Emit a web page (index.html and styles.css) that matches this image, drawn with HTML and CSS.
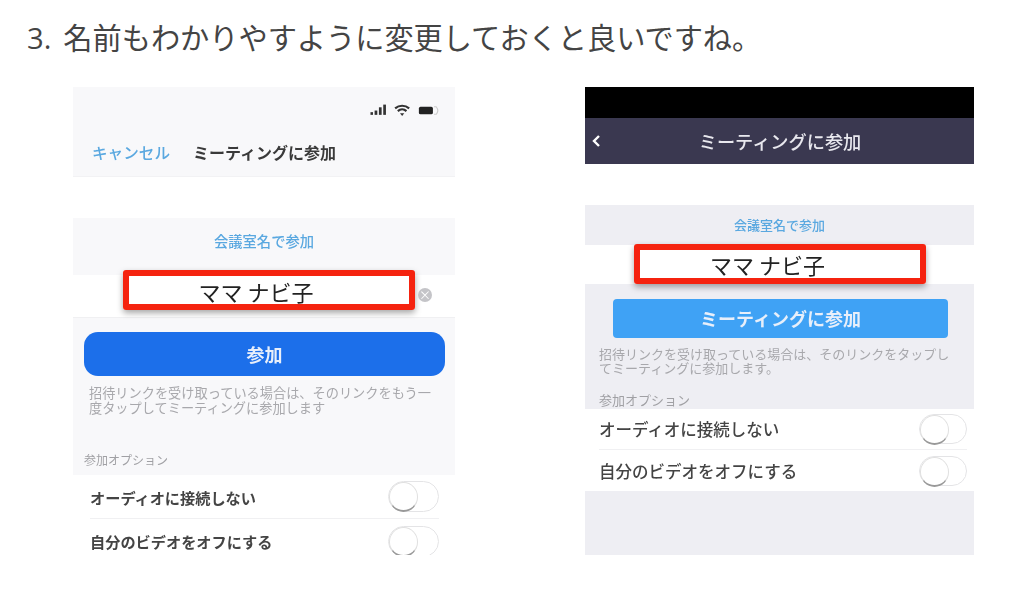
FILE: index.html
```html
<!DOCTYPE html>
<html lang="ja">
<head>
    <meta charset="UTF-8">
    <meta name="viewport" content="width=device-width, initial-scale=1.0">
    <title>名前の変更</title>
    <link rel="stylesheet" href="styles.css">
</head>
<body>
    <main class="page">
        <h2 class="step"><span class="step-num">3.</span>名前もわかりやすように変更しておくと良いですね。</h2>
        <div class="shots">
            <!-- iOS -->
            <section class="phone ios">
                <div class="status">
                    <svg width="68" height="12" viewBox="0 0 68 12">
                        <rect x="0" y="8" width="2.5" height="2.5" fill="#333"/>
                        <rect x="4" y="6.5" width="2.5" height="4" fill="#333"/>
                        <rect x="8" y="3.5" width="2.5" height="7" fill="#333"/>
                        <rect x="12" y="1" width="2.5" height="9.5" fill="#333"/>
                        <path d="M23 4.5a10 10 0 0 1 13 0M25.5 7a6 6 0 0 1 8 0" fill="none" stroke="#333" stroke-width="2"/>
                        <path d="M27.5 9h4l-2 2.5z" fill="#333"/>
                        <rect x="45" y="3" width="13" height="7" rx="1.5" fill="#222"/>
                        <path d="M59 3h2q3 3.500 0 7h-2" fill="none" stroke="#ccc"/>
                    </svg>
                </div>
                <div class="navbar">
                    <span class="cancel">キャンセル</span>
                    <span class="nav-title">ミーティングに参加</span>
                </div>
                <div class="room-label">会議室名で参加</div>
                <div class="name-row">
                    <span class="name">ママ ナビ子</span>
                    <span class="name-mark"></span>
                    <span class="clear-btn">×</span>
                </div>
                <div class="join-area">
                    <div class="join-btn">参加</div>
                    <p class="help">招待リンクを受け取っている場合は、そのリンクをもう一度タップしてミーティングに参加します</p>
                    <p class="opt-label">参加オプション</p>
                </div>
                <div class="opt-list">
                    <div class="opt-row"><span>オーディオに接続しない</span><i class="toggle"></i></div>
                    <div class="opt-row"><span>自分のビデオをオフにする</span><i class="toggle"></i></div>
                </div>
            </section>

            <!-- Android -->
            <section class="phone droid">
                <div class="blackbar"></div>
                <div class="navbar">
                    <svg class="back" width="10" height="14" viewBox="0 0 10 14"><path d="M8 2L3 7l5 5" fill="none" stroke="#fff" stroke-width="2.4"/></svg>
                    <span class="nav-title">ミーティングに参加</span>
                </div>
                <div class="room-label">会議室名で参加</div>
                <div class="name-row">
                    <span class="name">ママ ナビ子</span>
                    <span class="name-mark"></span>
                </div>
                <div class="join-area">
                    <div class="join-btn">ミーティングに参加</div>
                    <p class="help">招待リンクを受け取っている場合は、そのリンクをタップしてミーティングに参加します。</p>
                    <p class="opt-label">参加オプション</p>
                </div>
                <div class="opt-list">
                    <div class="opt-row"><span>オーディオに接続しない</span><i class="toggle"></i></div>
                    <div class="opt-row"><span>自分のビデオをオフにする</span><i class="toggle"></i></div>
                </div>
                <div class="filler"></div>
            </section>
        </div>
    </main>
</body>
</html>
```

FILE: styles.css
```css
body {
    margin: 0;
    background-color: #fff;
    color: #444;
    font-family: "Noto Sans CJK JP", "Open Sans", sans-serif;
}
.page {
    padding: 16px 0 0 27px;
}
.step {
    margin: 0;
    height: 40px;
    font-size: 29.2px;
    line-height: 40px;
    font-weight: 400;
    white-space: nowrap;
    color: #444;
}
.step-num {
    font-family: "Open Sans", sans-serif;
    margin-right: 12px;
}
.shots {
    display: flex;
    gap: 130px;
    margin: 31px 0 0 46px;
}
.phone {
    height: 468px;
    overflow: hidden;
    color: #333;
    display: flex;
    flex-direction: column;
}
.phone > * {
    flex-shrink: 0;
}
.phone p {
    margin: 0;
}
.ios {
    width: 382px;
}
.droid {
    width: 389px;
}

/* top bars */
.status {
    height: 37px;
    background: #f8f8fa;
    display: flex;
    justify-content: flex-end;
    align-items: flex-end;
    padding-right: 14px;
}
.status svg {
    filter: blur(0.5px);
    margin-bottom: 8px;
    transform: scale(1.08);
}
.ios .navbar {
    height: 53px;
    background: #f8f8fa;
    border-bottom: 1px solid #f2f2f4;
    box-sizing: border-box;
    display: flex;
    align-items: center;
    padding: 3px 0 0 19px;
    gap: 23px;
    margin-bottom: 41px;
}
.cancel {
    font-size: 15.6px;
    font-weight: 500;
    color: #5aa8e0;
    filter: blur(0.7px);
}
.nav-title {
    font-size: 16px;
    font-weight: 700;
    color: #3a3a3a;
    filter: blur(0.6px);
    white-space: nowrap;
}
.blackbar {
    height: 31px;
    background: #000;
}
.droid .navbar {
    height: 46px;
    background: #3a3850;
    display: flex;
    align-items: center;
    justify-content: center;
    position: relative;
    margin-bottom: 41px;
}
.droid .nav-title {
    font-size: 18.2px;
    font-weight: 500;
    color: #e8e8ee;
    margin-left: 1px;
}
.back {
    position: absolute;
    left: 6px;
    top: 16px;
}

/* room name */
.room-label {
    background: #f8f8fa;
    color: #5aa8e0;
    font-size: 14.3px;
    font-weight: 500;
    text-align: center;
    height: 57px;
    line-height: 46px;
    filter: blur(0.7px);
}
.droid .room-label {
    background: #eeeef3;
    font-size: 13px;
    height: 40px;
    line-height: 40px;
}
.name-row {
    height: 43px;
    background: #fff;
    display: flex;
    align-items: center;
    justify-content: center;
    position: relative;
    border-bottom: 1px solid #f0f0f2;
    box-sizing: border-box;
}
.droid .name-row {
    height: 39px;
    border-bottom: 0;
}
.name {
    font-size: 22px;
    line-height: 30px;
    color: #222;
    white-space: nowrap;
    margin: 0 16px 11px 0;
    filter: blur(0.4px);
}
.droid .name {
    margin: 0 24px 2px 0;
}
.name-mark {
    position: absolute;
    left: 50px;
    top: -5px;
    width: 292px;
    height: 40px;
    box-sizing: border-box;
    border: 6px solid #f5230f;
    border-radius: 3px;
    box-shadow: 0 3px 6px rgba(0, 0, 0, 0.35);
}
.droid .name-mark {
    left: 49px;
    top: -1px;
}
.clear-btn {
    position: absolute;
    left: 345px;
    top: 13px;
    width: 14px;
    height: 14px;
    border-radius: 50%;
    background: #c4c4c8;
    color: #fff;
    font-size: 12px;
    line-height: 14px;
    text-align: center;
    filter: blur(0.5px);
}

/* join button + note */
.join-area {
    background: #f8f8fa;
    height: 157px;
    box-sizing: border-box;
    padding: 14px 10px 0 11px;
}
.droid .join-area {
    background: #eeeef3;
    height: 125px;
    padding: 15px 14px 0 14px;
}
.join-btn {
    height: 44px;
    line-height: 44px;
    border-radius: 14px;
    background: #1c6fea;
    color: #e8effa;
    font-size: 18px;
    font-weight: 700;
    text-align: center;
    filter: blur(0.5px);
}
.droid .join-btn {
    height: 39px;
    line-height: 39px;
    margin: 0 12px 0 14px;
    border-radius: 4px;
    background: #3fa2f5;
}
.help {
    margin-top: 9px !important;
    padding: 0 2px 0 5px;
    font-size: 13.2px;
    line-height: 15px;
    color: #a8a8ac;
    filter: blur(0.7px);
}
.droid .help {
    margin-top: 9px !important;
    padding: 0;
    font-size: 13px;
    line-height: 14px;
}
.opt-label {
    margin-top: 37px !important;
    font-size: 12px;
    line-height: 16px;
    color: #a0a0a4;
    filter: blur(0.7px);
}
.droid .opt-label {
    margin-top: 17px !important;
    font-size: 13px;
}

/* option rows */
.opt-list {
    background: #fff;
    padding: 0 16px 0 17px;
}
.droid .opt-list {
    padding: 0 7px 0 14px;
}
.opt-row {
    height: 44px;
    box-sizing: border-box;
    display: flex;
    align-items: center;
    justify-content: space-between;
    font-size: 15.2px;
    font-weight: 700;
    color: #444;
    border-bottom: 1px solid #f0f0f2;
}
.opt-row:last-child {
    border-bottom: 0;
}
.opt-row span {
    filter: blur(0.7px);
}
.droid .opt-row {
    height: 41px;
    font-size: 16.5px;
    font-weight: 500;
}
.toggle {
    position: relative;
    width: 51px;
    height: 31px;
    box-sizing: border-box;
    border: 1px solid #e4e4e6;
    border-radius: 16px;
    filter: blur(0.6px);
}
.toggle::before {
    content: "";
    position: absolute;
    left: 0;
    top: 0;
    width: 27px;
    height: 27px;
    border-radius: 50%;
    background: #fff;
    border: 1px solid #e0e0e0;
    border-bottom: 2px solid #999;
}
.droid .toggle {
    width: 48px;
    height: 30px;
}
.filler {
    flex: 1;
    background: #eeeef3;
}
```
